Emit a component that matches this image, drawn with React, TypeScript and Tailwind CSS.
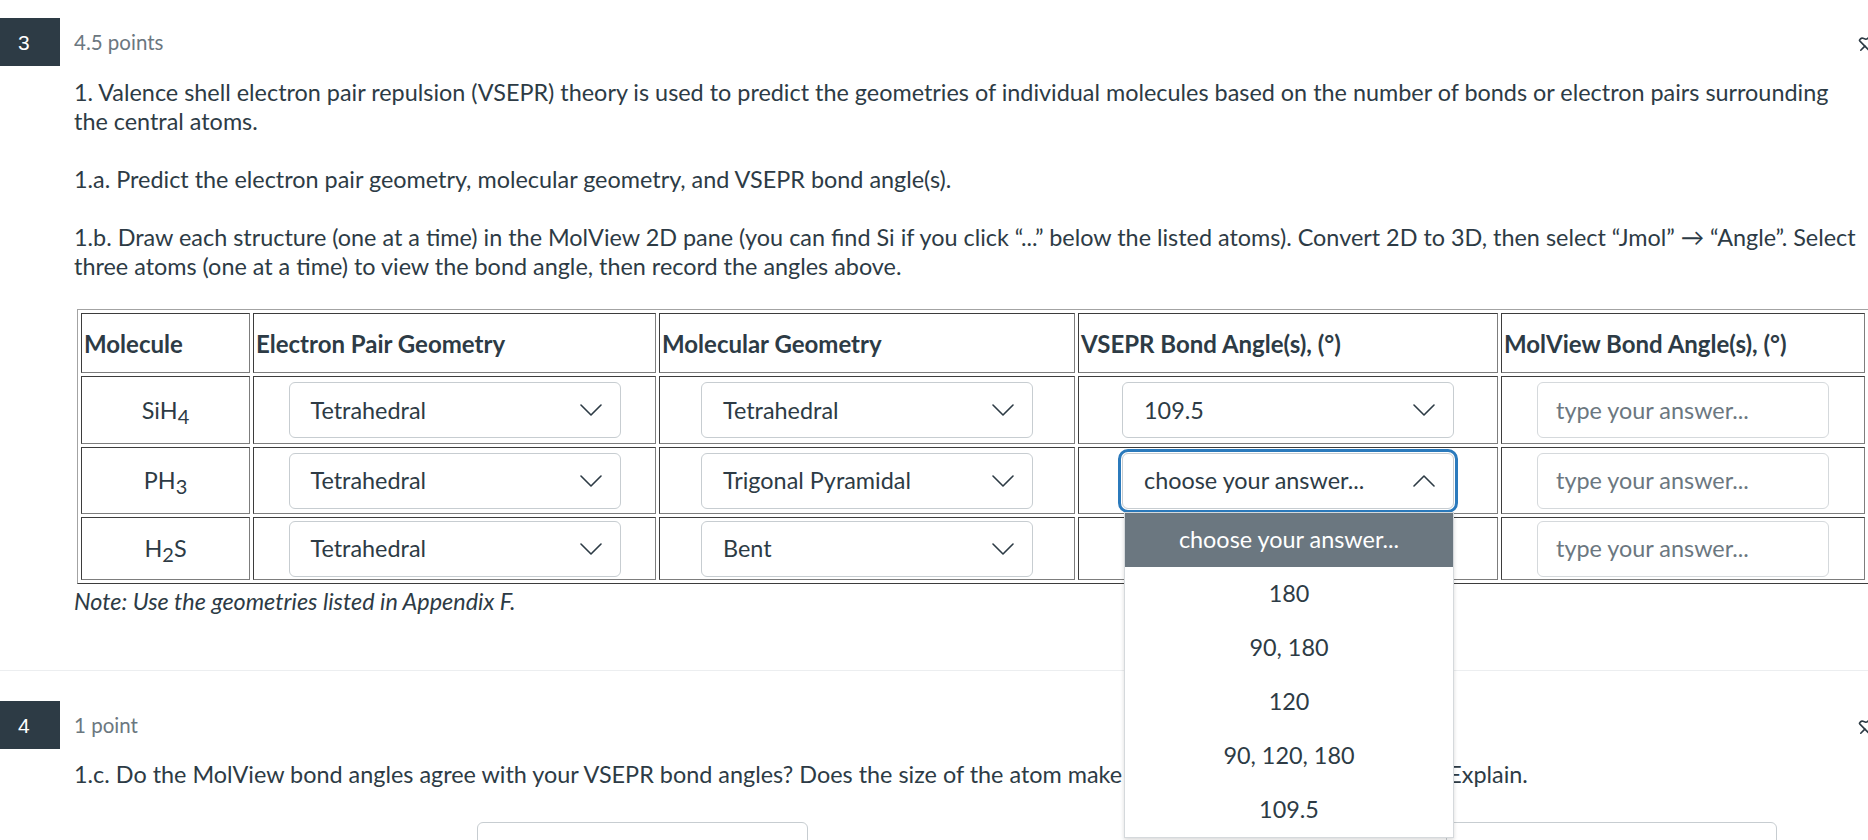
import React from 'react';
import { Pin } from 'lucide-react';

function Chevron({ up = false }: { up?: boolean }) {
  return (
    <svg width="22" height="12" viewBox="0 0 22 12" fill="none" stroke="#2d3b45" strokeWidth="1.6" strokeLinecap="round" strokeLinejoin="round">
      {up ? <path d="M1 11 L11 1 L21 11" /> : <path d="M1 1 L11 11 L21 1" />}
    </svg>
  );
}

const options = ['180', '90, 180', '120', '90, 120, 180', '109.5'];

function Dropdown() {
  return (
    <div className="absolute left-[2px] top-[calc(100%+3px)] z-20 w-[330px] border border-[#d5d9dc] bg-white shadow-[0_2px_4px_rgba(0,0,0,0.15)]">
      <div className="flex h-[54px] items-center justify-center bg-[#6b7780] text-white">choose your answer...</div>
      {options.map((o) => (
        <div key={o} className="flex h-[54px] items-center justify-center">
          {o}
        </div>
      ))}
    </div>
  );
}

function Select({ value, open = false }: { value: string; open?: boolean }) {
  return (
    <div className="relative mx-auto w-[332px]">
      <div
        className={`flex h-[56px] items-center justify-between rounded-[6px] border border-[#c7cdd1] bg-white pl-[21px] pr-[18px] ${
          open ? 'outline-3 outline-offset-1 outline-[#2b7abc]' : ''
        }`}
      >
        <span>{value}</span>
        <Chevron up={open} />
      </div>
      {open && <Dropdown />}
    </div>
  );
}

function TextBox() {
  return (
    <div className="mx-auto flex h-[56px] w-[292px] items-center rounded-[6px] border border-[#d5d9dc] bg-white pl-[18px] text-[#6b7780]">
      type your answer...
    </div>
  );
}

function Badge({ n }: { n: string }) {
  return (
    <div className="flex h-[48px] w-[60px] items-center bg-[#2d3b45] pl-[18px] font-['Liberation_Sans',Arial,sans-serif] text-[21px] text-white">
      {n}
    </div>
  );
}

function Formula({ parts }: { parts: [string, string, string] }) {
  return (
    <span>
      {parts[0]}
      <sub className="relative -bottom-[5px] text-[20px] align-baseline">{parts[1]}</sub>
      {parts[2]}
    </span>
  );
}

const th = 'border border-t-[#3d3d3d] border-l-[#3d3d3d] border-b-[#7d7d7d] border-r-[#7d7d7d] p-[2px] text-left align-middle text-[24px] font-bold';
const td = 'border border-t-[#3d3d3d] border-l-[#3d3d3d] border-b-[#7d7d7d] border-r-[#7d7d7d] p-[2px] align-middle';

const rows: { f: [string, string, string]; epg: string; mg: string; h: string }[] = [
  { f: ['SiH', '4', ''], epg: 'Tetrahedral', mg: 'Tetrahedral', h: 'h-[68px]' },
  { f: ['PH', '3', ''], epg: 'Tetrahedral', mg: 'Trigonal Pyramidal', h: 'h-[67px]' },
  { f: ['H', '2', 'S'], epg: 'Tetrahedral', mg: 'Bent', h: 'h-[63px]' },
];

export default function App() {
  return (
    <div className="relative h-[840px] w-[1868px] overflow-hidden bg-white font-['Lato',sans-serif] text-[23.4px] leading-[29px] text-[#2d3b45]">
      {/* question 3 */}
      <div className="pt-[18px]">
        <div className="flex items-center">
          <Badge n="3" />
          <span className="ml-[14px] text-[20.5px] text-[#6b7780]">4.5 points</span>
          <div className="flex-1" />
          <Pin className="mr-[-15px] h-[28px] w-[28px] rotate-45 text-[#2d3b45]" strokeWidth={1.4} />
        </div>

        <div className="pl-[74px] pt-[12px] whitespace-nowrap">
          <p>
            1. Valence shell electron pair repulsion (VSEPR) theory is used to predict the geometries of individual molecules based on the number of bonds or electron pairs surrounding
            <br />
            the central atoms.
          </p>
          <p className="mt-[29px]">1.a. Predict the electron pair geometry, molecular geometry, and VSEPR bond angle(s).</p>
          <p className="mt-[29px]">
            1.b. Draw each structure (one at a time) in the MolView 2D pane (you can find Si if you click “...” below the listed atoms). Convert 2D to 3D, then select “Jmol” → “Angle”. Select
            <br />
            three atoms (one at a time) to view the bond angle, then record the angles above.
          </p>

          <table className="ml-[3px] mt-[28px] w-[1792px] table-fixed border-separate border-spacing-[3px] border border-t-[#a3a3a3] border-l-[#a3a3a3] border-r-[#3d3d3d] border-b-[#3d3d3d]">
            <thead>
              <tr>
                <th className={`${th} h-[60px] w-[169px]`}>Molecule</th>
                <th className={`${th} w-[403px]`}>Electron Pair Geometry</th>
                <th className={`${th} w-[416px]`}>Molecular Geometry</th>
                <th className={`${th} w-[420px]`}>VSEPR Bond Angle(s), (°)</th>
                <th className={`${th} w-[364px]`}>MolView Bond Angle(s), (°)</th>
              </tr>
            </thead>
            <tbody>
              {rows.map((r, i) => (
                <tr key={i}>
                  <td className={`${td} ${r.h} text-center`}>
                    <Formula parts={r.f} />
                  </td>
                  <td className={td}>
                    <Select value={r.epg} />
                  </td>
                  <td className={td}>
                    <Select value={r.mg} />
                  </td>
                  <td className={td}>
                    {i === 0 && <Select value="109.5" />}
                    {i === 1 && <Select value="choose your answer..." open />}
                  </td>
                  <td className={td}>
                    <TextBox />
                  </td>
                </tr>
              ))}
            </tbody>
          </table>

          <p className="mt-[3px] italic">Note: Use the geometries listed in Appendix F.</p>
        </div>
      </div>

      <div className="mt-[54px] border-t border-[#eceef0]" />

      {/* question 4 */}
      <div className="pt-[30px]">
        <div className="flex items-center">
          <Badge n="4" />
          <span className="ml-[14px] text-[20.5px] text-[#6b7780]">1 point</span>
          <div className="flex-1" />
          <Pin className="mr-[-15px] h-[28px] w-[28px] rotate-45 text-[#2d3b45]" strokeWidth={1.4} />
        </div>
        <div className="pl-[74px] pt-[11px] whitespace-nowrap">
          <p>
            1.c. Do the MolView bond angles agree with your VSEPR bond angles? Does the size of the atom make a difference in the bond angle? Explain.
          </p>
          <div className="mt-[33px] flex">
            <div className="ml-[403px] h-[56px] w-[331px] rounded-[6px] border border-[#c7cdd1]" />
            <div className="ml-[638px] h-[56px] w-[331px] rounded-[6px] border border-[#c7cdd1]" />
          </div>
        </div>
      </div>
    </div>
  );
}
